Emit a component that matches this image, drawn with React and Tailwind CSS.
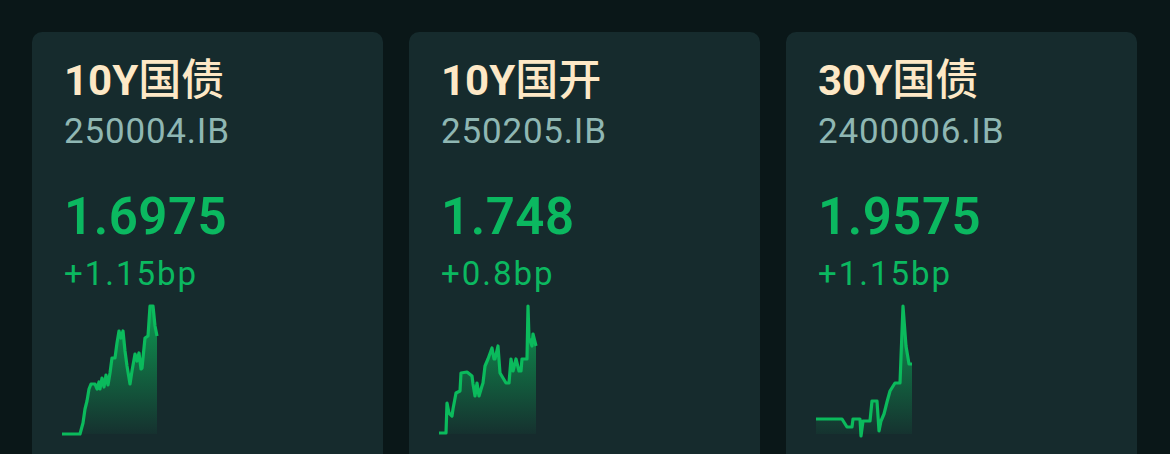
import React from "react";

const cards = [
  {
    latin: "10Y",
    cjk: "国债",
    code: "250004.IB",
    price: "1.6975",
    change: "+1.15bp",
    pts: "2,133 20,133 23,122 25,108 27,100 29,88 31,83 35,83 37,88 39,81 40,88 42,77 44,86 46,74 48,84 50,72 52,57 55,57 57,42 59,30 61,37 63,30 65,50 67,65 70,83 72,70 75,53 77,60 79,52 81,68 82,67 85,37 88,35 90,5 93,5 95,25 97,35",
    start: 2,
    end: 97,
  },
  {
    latin: "10Y",
    cjk: "国开",
    code: "250205.IB",
    price: "1.748",
    change: "+0.8bp",
    pts: "2,132 9,132 10,102 12,112 15,115 16,108 19,92 23,90 24,72 30,71 35,75 36,83 38,95 40,82 42,95 45,85 46,82 48,65 51,58 55,47 57,58 58,58 61,45 63,72 66,77 69,82 72,82 74,58 76,70 79,58 82,70 84,70 85,58 90,58 91,5 92,37 95,45 96,33 99,45",
    start: 2,
    end: 99,
  },
  {
    latin: "30Y",
    cjk: "国债",
    code: "2400006.IB",
    price: "1.9575",
    change: "+1.15bp",
    pts: "2,118 28,118 33,126 38,126 39,118 46,118 47,135 49,120 56,120 58,100 63,100 65,130 67,120 70,113 73,101 76,90 81,82 86,82 89,5 92,45 95,63 98,63",
    start: 2,
    end: 98,
  },
];

function Spark({ pts, start, end, id }) {
  const area = `${start},133 ${pts} ${end},133`;
  return (
    <svg width="110" height="140" viewBox="0 0 110 140" className="block -ml-[4px] mt-[7px]">
      <defs>
        <linearGradient id={id} x1="0" y1="0" x2="0" y2="1">
          <stop offset="0%" stopColor="#0bbf5e" stopOpacity="0.75" />
          <stop offset="100%" stopColor="#0bbf5e" stopOpacity="0.04" />
        </linearGradient>
      </defs>
      <polygon points={area} fill={`url(#${id})`} />
      <polyline points={pts} fill="none" stroke="#0bba5c" strokeWidth="3.2" strokeLinejoin="round" strokeLinecap="butt" />
    </svg>
  );
}

export default function App() {
  return (
    <div
      className="w-[1170px] h-[454px] overflow-hidden bg-[#0a1718] flex gap-[26px] pl-[32px] pt-[32px]"
      style={{ fontFamily: "Roboto, 'Noto Sans CJK SC', sans-serif" }}
    >
      {cards.map((c, i) => (
        <div key={i} className="w-[351px] h-[440px] shrink-0 rounded-[10px] bg-[#162b2d] pt-[24px] pl-[32px]">
          <div className="text-[42px] leading-[48px] text-[#fde8c6]">
            <span className="font-bold">{c.latin}</span>
            <span className="font-medium text-[43px]">{c.cjk}</span>
          </div>
          <div className="mt-[7px] text-[35px] leading-[40px] tracking-[0.8px] text-[#8fb7b3]">{c.code}</div>
          <div className="mt-[35px] text-[51px] leading-[60px] font-semibold tracking-[0.5px] text-[#0bb860]">{c.price}</div>
          <div className="mt-[7px] text-[33px] leading-[40px] tracking-[2px] text-[#0bb860]">{c.change}</div>
          <Spark pts={c.pts} start={c.start} end={c.end} id={`g${i}`} />
        </div>
      ))}
    </div>
  );
}
